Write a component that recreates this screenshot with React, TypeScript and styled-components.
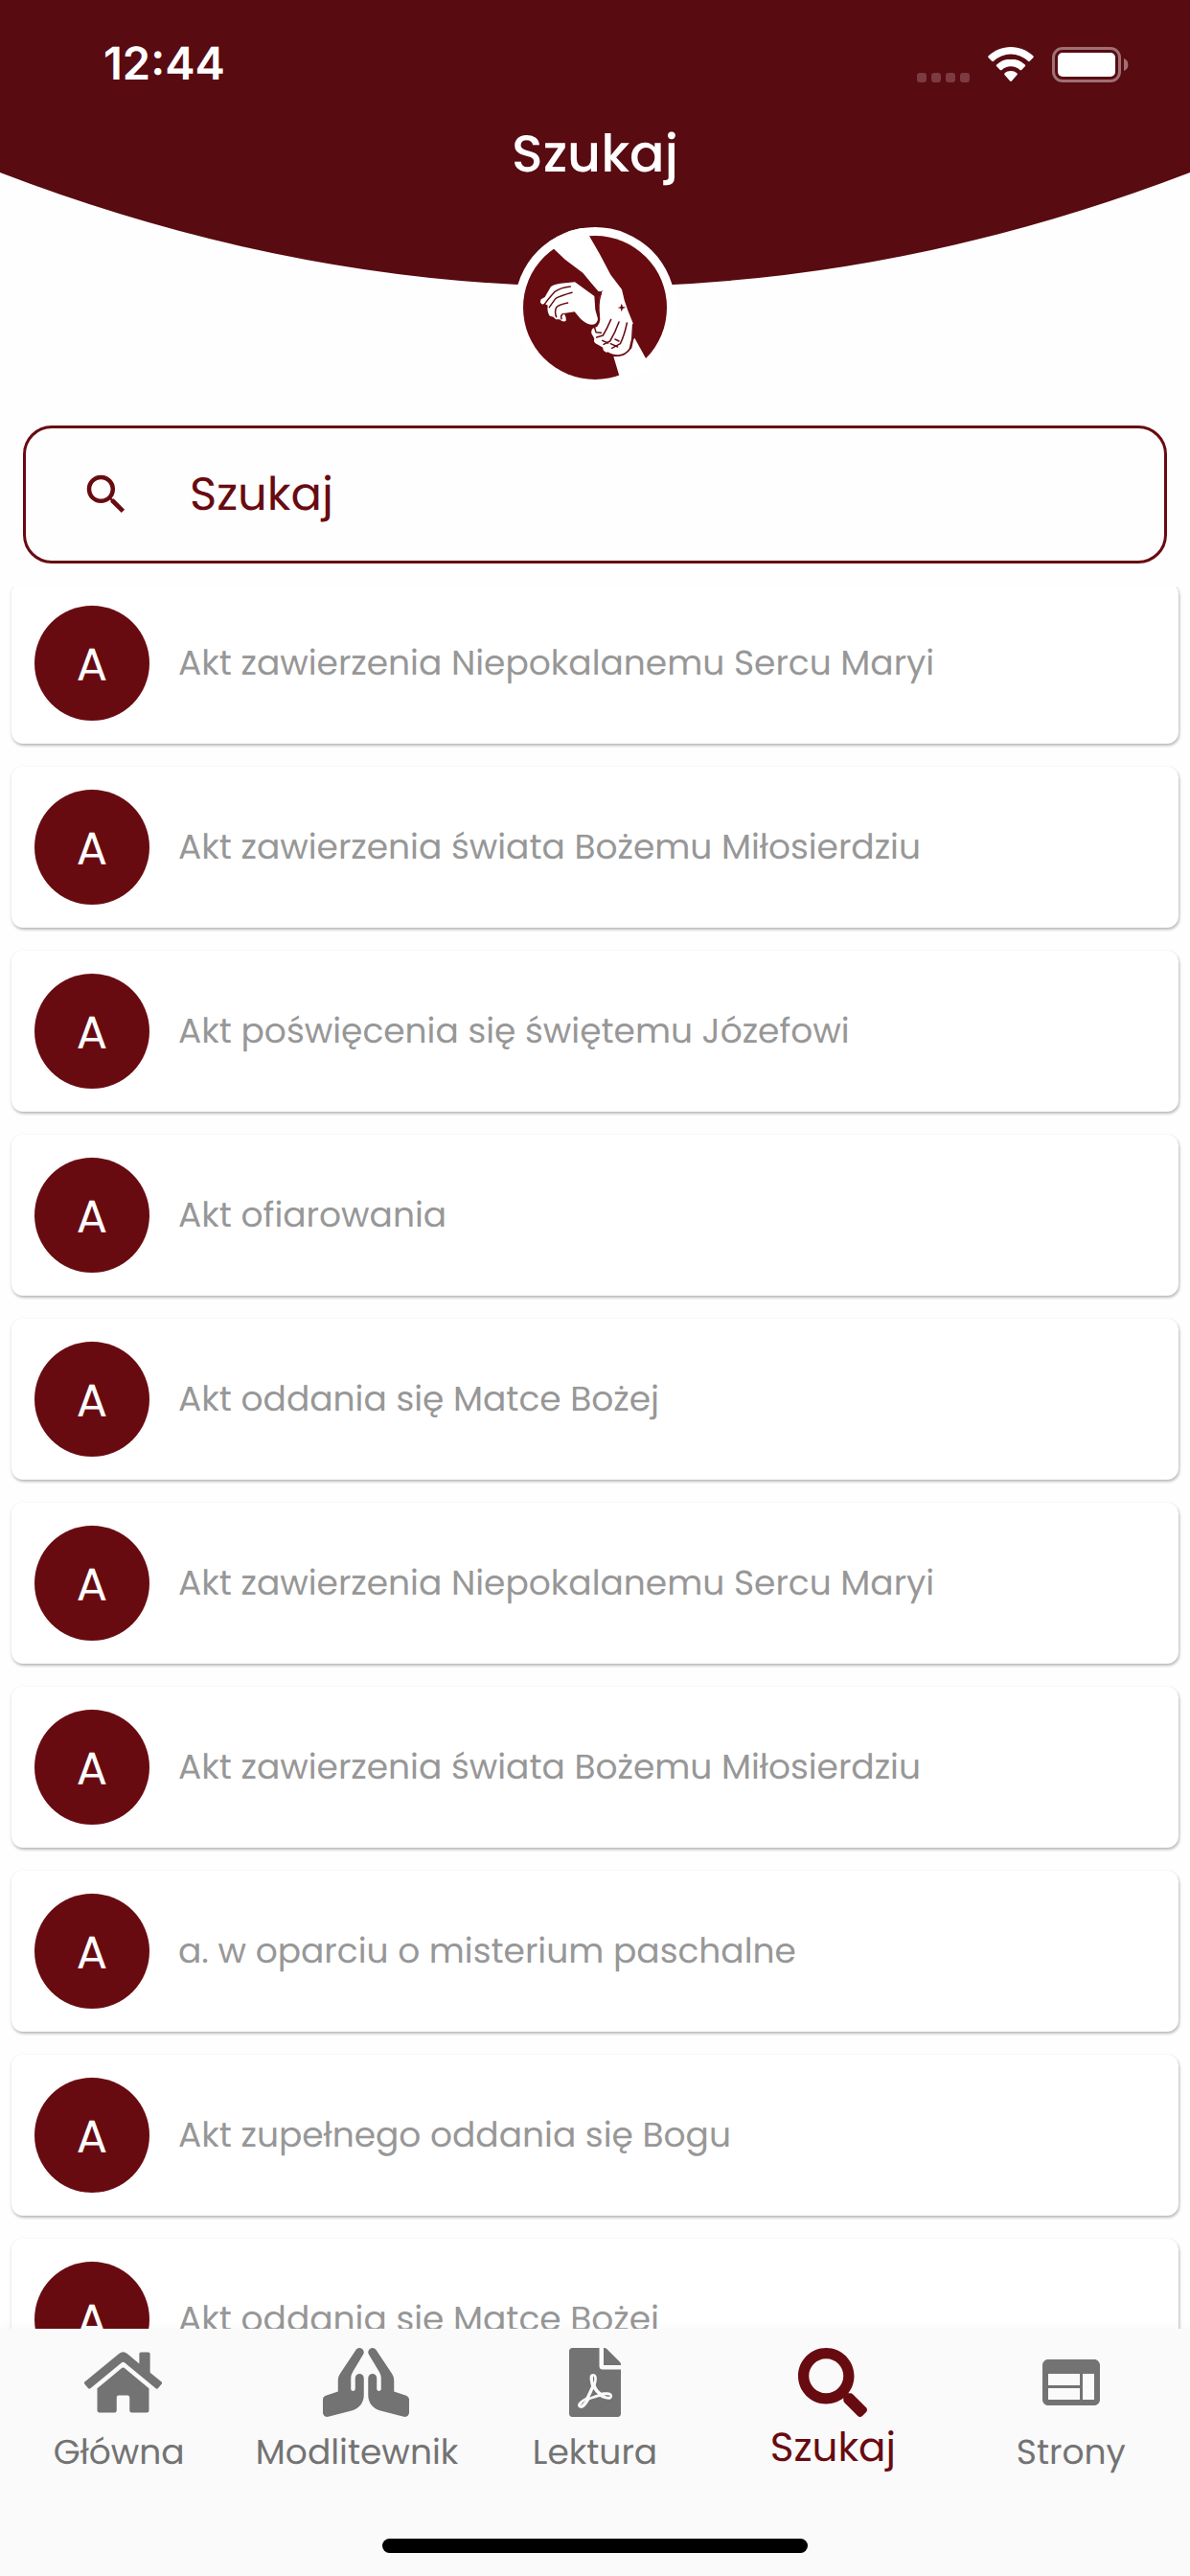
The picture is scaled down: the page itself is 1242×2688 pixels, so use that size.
import React, { useState } from "react";
import styled, { createGlobalStyle } from "styled-components";
import { FaHome, FaPrayingHands, FaFilePdf, FaSearch } from "react-icons/fa";
import { MdSearch, MdWeb } from "react-icons/md";
import type { IconType } from "react-icons";

const color = {
  header: "#580b11",
  accent: "#680b11",
  page: "#fefefe",
  nav: "#fafafa",
  muted: "#979797",
  navText: "#737373",
};

const GlobalStyle = createGlobalStyle`
  *, *::before, *::after { box-sizing: border-box; }
  body {
    margin: 0;
    background: ${color.page};
    font-family: Poppins, Inter, "Noto Sans", sans-serif;
    text-rendering: geometricPrecision;
  }
  button, input { text-rendering: inherit; }
`;

const Screen = styled.div`
  display: flex;
  flex-direction: column;
  height: 100vh;
  overflow: hidden;
`;

const Header = styled.header`
  position: relative;
  display: flex;
  flex-direction: column;
  align-items: center;
  color: #fff;
`;

const HeaderShape = styled.svg`
  position: absolute;
  inset: 0 0 auto;
  z-index: -1;
  width: 100%;
  height: 299px;
`;

const StatusBar = styled.div`
  display: flex;
  align-items: center;
  justify-content: space-between;
  width: 100%;
  height: 132px;
  padding: 2px 64px 0 108px;
`;

const Clock = styled.time`
  font: 600 47px/56px Inter, sans-serif;
`;

const StatusIcons = styled.div`
  display: flex;
  align-items: flex-end;
  gap: 19px;
`;

const Title = styled.h1`
  margin: 0 0 49px;
  font-size: 54px;
  line-height: 56px;
  font-weight: 500;
`;

const Emblem = styled.svg`
  display: block;
  width: 168px;
  height: 168px;
`;

const SearchField = styled.label`
  display: flex;
  align-items: center;
  gap: 60px;
  margin: 39px 24px 24px;
  padding: 0 57px;
  height: 144px;
  flex: none;
  border: 3px solid ${color.accent};
  border-radius: 30px;
  color: ${color.accent};
`;

const SearchInput = styled.input`
  flex: 1;
  min-width: 0;
  padding: 0;
  border: 0;
  outline: 0;
  background: none;
  color: inherit;
  font: 400 48px/72px Poppins, Inter, "Noto Sans", sans-serif;

  &::placeholder {
    color: inherit;
    opacity: 1;
  }
`;

const Results = styled.main`
  flex: 1;
  min-height: 0;
  overflow: hidden;
`;

const ResultList = styled.ul`
  display: grid;
  gap: 24px;
  margin: -4px 0 0;
  padding: 0 12px;
  list-style: none;
`;

const ResultCard = styled.button`
  display: flex;
  align-items: center;
  gap: 30px;
  width: 100%;
  height: 168px;
  padding: 0 24px;
  border: 0;
  border-radius: 12px;
  background: #fff;
  box-shadow: 1px 2px 3px rgba(0, 0, 0, 0.24), 0 1px 4px rgba(0, 0, 0, 0.08);
  color: ${color.muted};
  font: 400 36px/54px Poppins, Inter, "Noto Sans", sans-serif;
  text-align: left;
`;

const Avatar = styled.span`
  display: grid;
  place-items: center;
  flex: none;
  width: 120px;
  height: 120px;
  padding-top: 3px;
  border-radius: 50%;
  background: ${color.accent};
  color: #fff;
  font-size: 48px;
`;

const BottomBar = styled.footer`
  position: relative;
  display: flex;
  flex-direction: column;
  align-items: center;
  justify-content: space-between;
  flex: none;
  height: 258px;
  padding: 20px 0 24px;
  background: ${color.nav};
  box-shadow: 0 -2px 12px rgba(0, 0, 0, 0.03);
`;

const Tabs = styled.nav`
  display: grid;
  grid-template-columns: repeat(5, 1fr);
  width: 100%;
`;

const Tab = styled.a<{ $active?: boolean }>`
  display: flex;
  flex-direction: column;
  align-items: center;
  gap: ${(p) => (p.$active ? 8 : 13)}px;
  color: ${(p) => (p.$active ? color.accent : color.navText)};
  font-size: ${(p) => (p.$active ? 42 : 36)}px;
  line-height: 48px;
  text-decoration: none;
`;

const TabIcon = styled.span<{ $width: number }>`
  display: flex;
  justify-content: safe center;
  width: 72px;
  height: 72px;

  svg {
    flex: none;
    width: ${(p) => p.$width}px;
    height: 72px;
  }
`;

const HomeIndicator = styled.div`
  width: 444px;
  height: 15px;
  border-radius: 8px;
  background: #000;
`;

function Signal() {
  return (
    <svg width="55" height="10" viewBox="0 0 55 10" fill="#7d3b41" aria-hidden="true">
      {[0, 15, 30, 45].map((x) => (
        <rect key={x} x={x} width="10" height="10" rx="3" />
      ))}
    </svg>
  );
}

function Wifi() {
  return (
    <svg width="48" height="37" viewBox="0 0 48 37" fill="#fff" aria-hidden="true">
      <path d="M24 0C15 0 6.800 3.500.700 9.300a1.300 1.300 0 0 0 0 1.900L4.200 14.800a1.300 1.300 0 0 0 1.800 0A26 26 0 0 1 42 14.800a1.300 1.300 0 0 0 1.800 0l3.500-3.600a1.300 1.300 0 0 0 0-1.900C41.200 3.500 33 0 24 0Z" />
      <path d="M24 12.600c-5.700 0-10.800 2.200-14.800 5.800a1.300 1.300 0 0 0 0 1.900l3.600 3.600a1.300 1.300 0 0 0 1.800 0 14 14 0 0 1 18.800 0 1.300 1.300 0 0 0 1.800 0l3.600-3.600a1.300 1.300 0 0 0 0-1.900c-4-3.600-9.100-5.800-14.800-5.800Z" />
      <path d="M24 25c-2.500 0-4.700.8-6.400 2.300a1.300 1.300 0 0 0 0 1.900l5.500 6.300a1.300 1.300 0 0 0 1.800 0l5.500-6.300a1.300 1.300 0 0 0 0-1.900A9.800 9.800 0 0 0 24 25Z" />
    </svg>
  );
}

function Battery() {
  return (
    <svg width="80" height="37" viewBox="0 0 80 37" aria-hidden="true">
      <rect x="1.500" y="1.500" width="69" height="34" rx="9.500" fill="none" stroke="#9e7074" strokeWidth="3" />
      <rect x="6" y="6" width="60" height="25" rx="5" fill="#fff" />
      <path d="M75 12a7 7 0 0 1 0 13Z" fill="#9e7074" />
    </svg>
  );
}

function Hands() {
  return (
    <Emblem viewBox="111 411 504 504" role="img" aria-label="Dłonie">
      <clipPath id="emblem-disc">
        <circle cx="363" cy="663" r="252" />
      </clipPath>
      <circle cx="363" cy="663" r="252" fill="#fff" />
      <circle cx="363" cy="663" r="225" fill={color.accent} />
      <g fill="#fff" clipPath="url(#emblem-disc)">
        <path d="M235 480 200 430 320 400 346 440 378 496 412 560 447 606 455 640 466 672 482 712 480 760 473 794Q462 812 436 813Q420 815 400 804Q386 798 388 788L370 778Q356 772 361 760L352 744Q350 728 362 726L370 722Q382 706 378 692Q372 660 376 634Q378 620 388 609L376 615 346 580 325 554 270 513Z" />
        <path d="M487 758 521 820 545 870 460 915 438 873 421 816Q455 818 478 790L484 762Z" />
        <path d="M300 583 361 627 364 670 372 698Q370 716 352 716Q335 714 318 698L299 676 265 681Q274 692 272 704Q262 710 252 700L240 700Q232 688 222 690Q212 676 215 656Q204 648 199 653Q188 650 194 637L206 630 225 597Q240 588 270 586Z" />
      </g>
      <g fill="none" stroke={color.accent} strokeWidth="4.500" strokeLinecap="round" strokeLinejoin="round">
        <path d="M286 597Q255 600 236 614Q218 634 205 652" />
        <path d="M291 616Q255 626 240 634Q228 650 220 662" />
        <path d="M278 648Q246 654 241 664Q236 680 242 692" />
        <path d="M264 682Q254 686 258 698" />
        <path d="M413 700Q400 730 388 750L368 756M438 708Q426 742 410 768L390 778" />
        <path d="M463 711Q455 750 442 776L416 790M362 726 366 740 382 742M386 766 404 774M412 776 434 786M426 762 438 768" />
        <path d="M482 716 479 762 472 792Q460 811 436 813Q416 813 402 804" />
        <path d="M376 614Q386 616 380 624Q372 650 376 690" />
      </g>
      <path d="M446 650 450 660 460 662 450 666 446 676 443 665 434 664 443 660Z" fill={color.accent} />
    </Emblem>
  );
}

const prayers = [
  "Akt zawierzenia Niepokalanemu Sercu Maryi",
  "Akt zawierzenia świata Bożemu Miłosierdziu",
  "Akt poświęcenia się świętemu Józefowi",
  "Akt ofiarowania",
  "Akt oddania się Matce Bożej",
  "Akt zawierzenia Niepokalanemu Sercu Maryi",
  "Akt zawierzenia świata Bożemu Miłosierdziu",
  "a. w oparciu o misterium paschalne",
  "Akt zupełnego oddania się Bogu",
  "Akt oddania się Matce Bożej",
];

const tabs: { label: string; icon: IconType; width: number; active?: boolean }[] = [
  { label: "Główna", icon: FaHome, width: 81 },
  { label: "Modlitewnik", icon: FaPrayingHands, width: 90 },
  { label: "Lektura", icon: FaFilePdf, width: 54 },
  { label: "Szukaj", icon: FaSearch, width: 72, active: true },
  { label: "Strony", icon: MdWeb, width: 72 },
];

export default function App() {
  const [query, setQuery] = useState("");
  const visible = prayers.filter((p) => p.toLowerCase().includes(query.toLowerCase()));

  return (
    <Screen>
      <GlobalStyle />
      <Header>
        <HeaderShape viewBox="0 0 100 299" preserveAspectRatio="none" aria-hidden="true">
          <path d="M0 0H100V180Q50 418 0 180Z" fill={color.header} />
        </HeaderShape>
        <StatusBar>
          <Clock>12:44</Clock>
          <StatusIcons>
            <Signal />
            <Wifi />
            <Battery />
          </StatusIcons>
        </StatusBar>
        <Title>Szukaj</Title>
        <Hands />
      </Header>

      <SearchField>
        <MdSearch size={54} aria-hidden="true" />
        <SearchInput
          type="text"
          aria-label="Szukaj"
          placeholder="Szukaj"
          value={query}
          onChange={(e) => setQuery(e.target.value)}
        />
      </SearchField>

      <Results>
        <ResultList>
          {visible.map((prayer, i) => (
            <li key={i}>
              <ResultCard type="button">
                <Avatar>{prayer[0].toUpperCase()}</Avatar>
                {prayer}
              </ResultCard>
            </li>
          ))}
        </ResultList>
      </Results>

      <BottomBar>
        <Tabs>
          {tabs.map(({ label, icon: Icon, width, active }) => (
            <Tab key={label} href="#" $active={active} aria-current={active ? "page" : undefined}>
              <TabIcon $width={width}>
                <Icon aria-hidden="true" />
              </TabIcon>
              {label}
            </Tab>
          ))}
        </Tabs>
        <HomeIndicator />
      </BottomBar>
    </Screen>
  );
}
